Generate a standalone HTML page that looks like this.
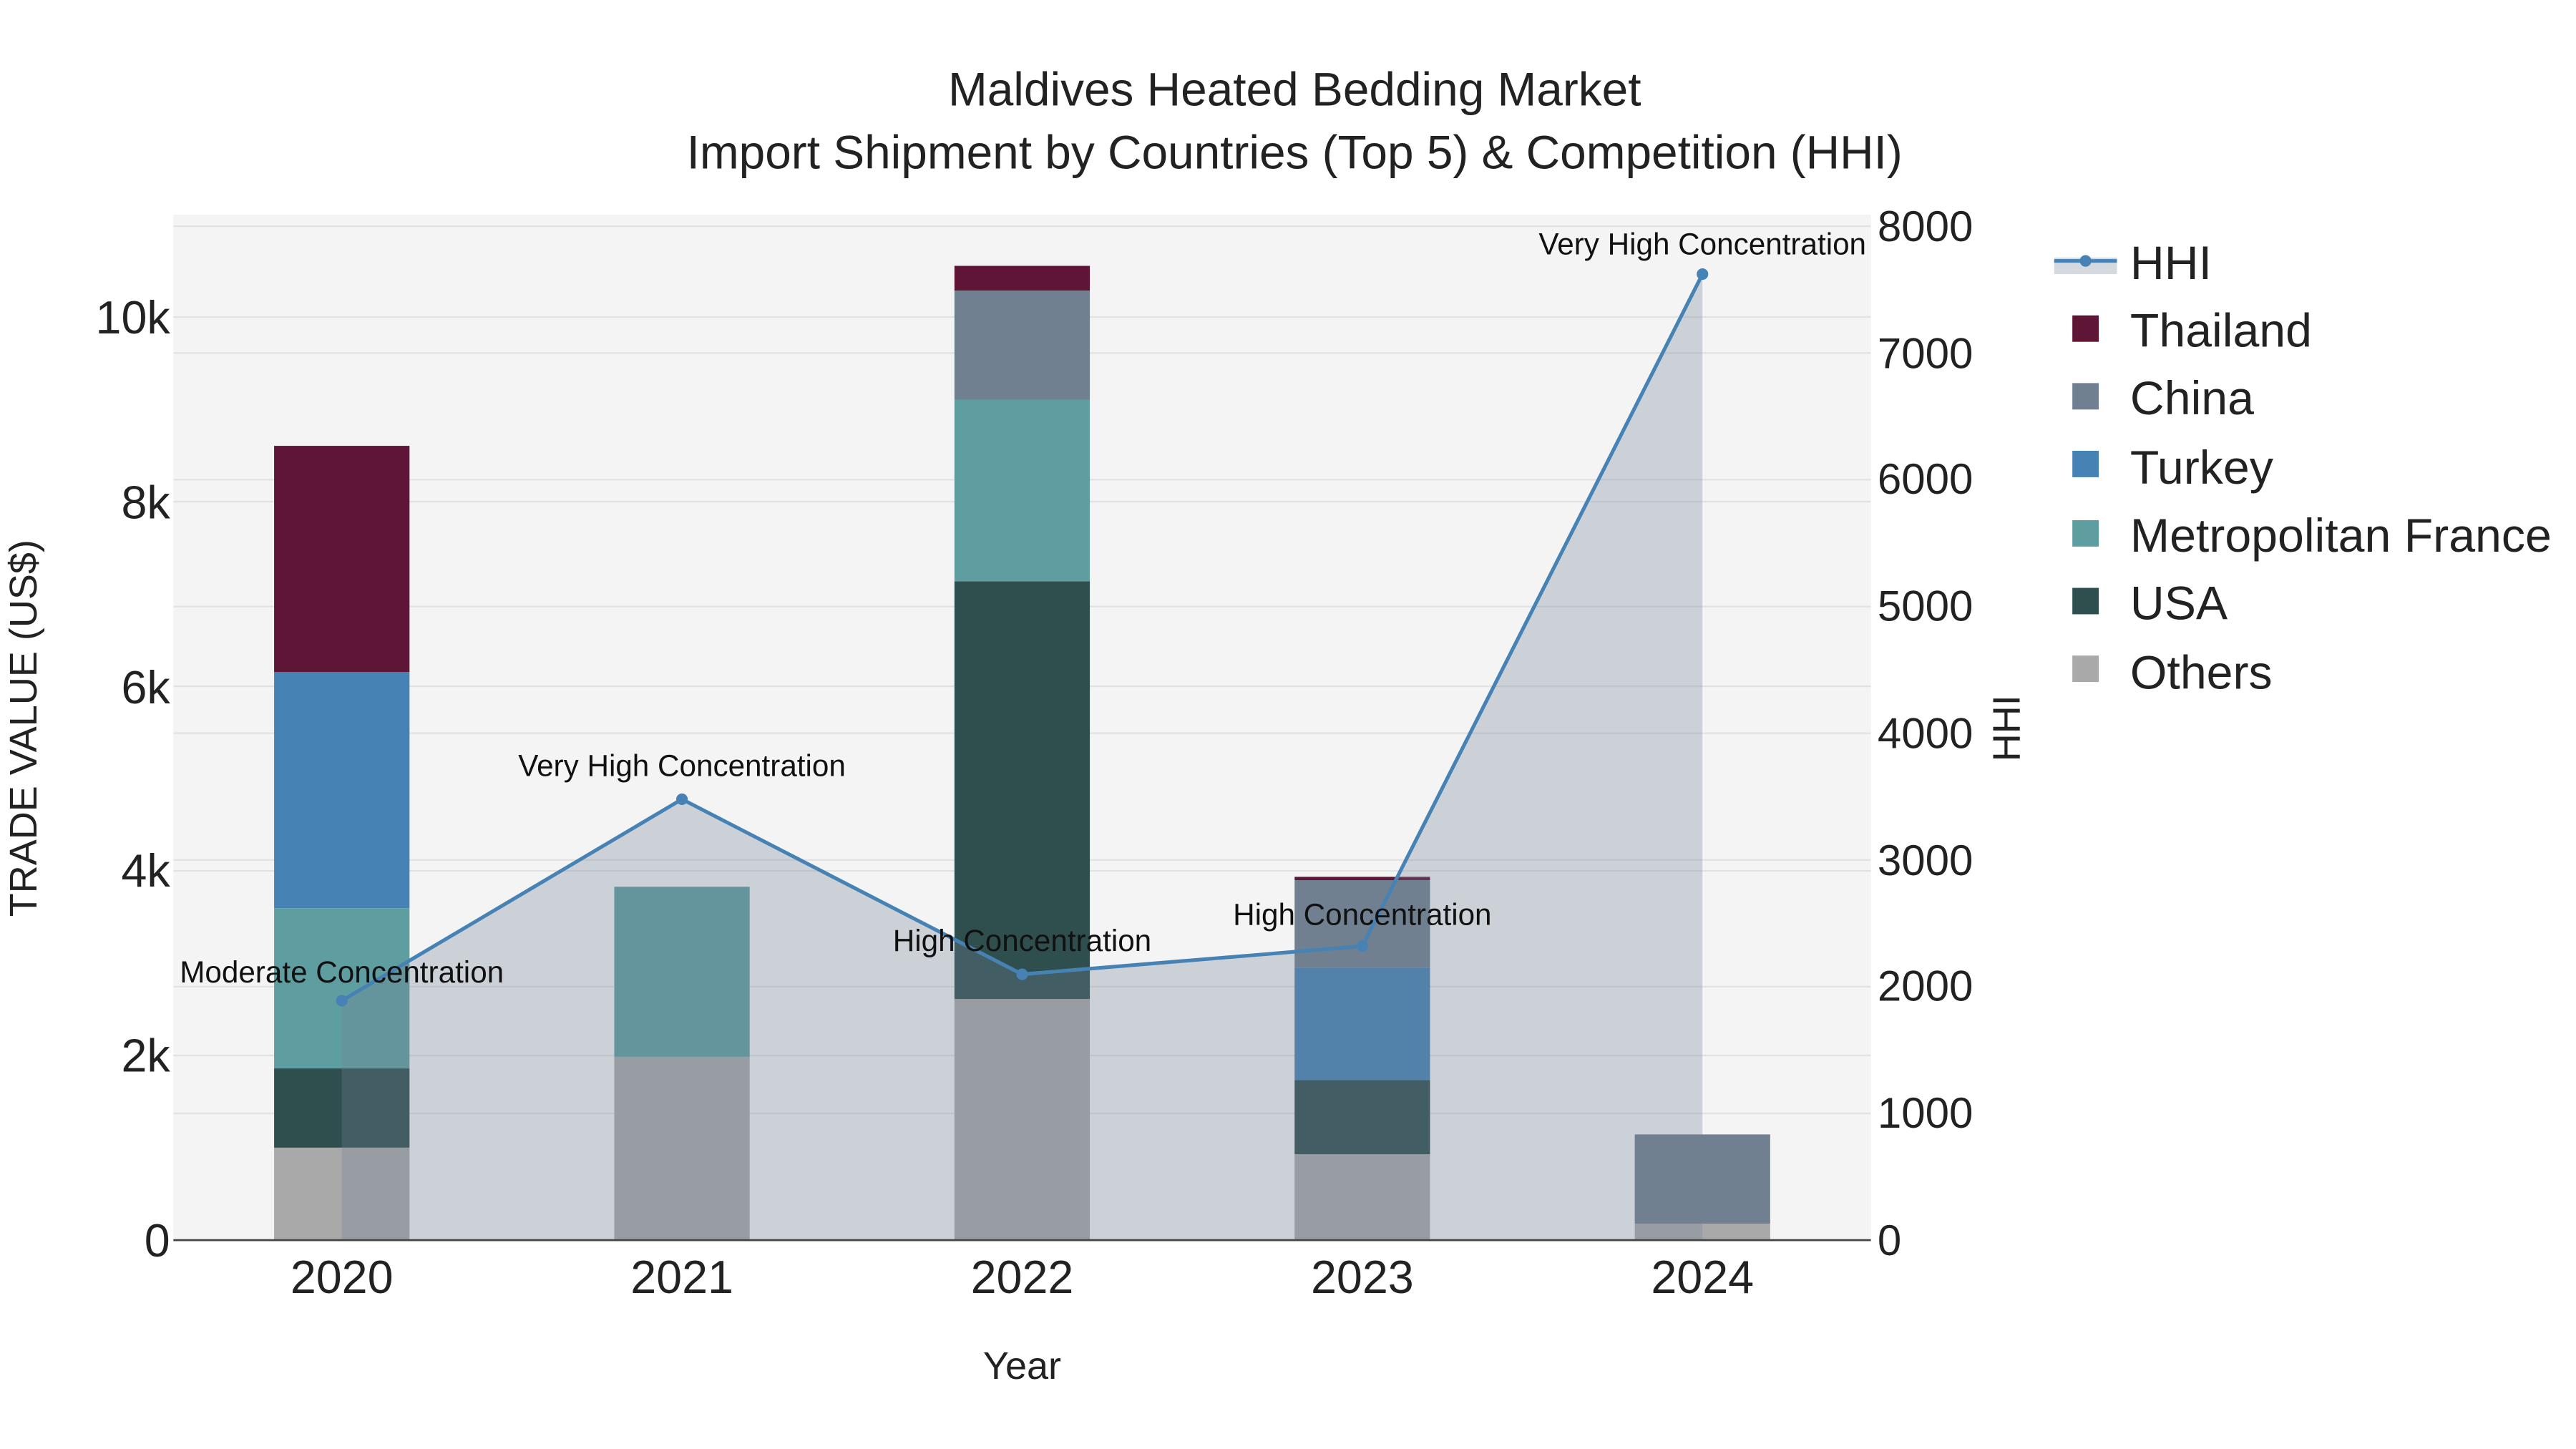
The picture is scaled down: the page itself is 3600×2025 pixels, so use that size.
<!DOCTYPE html>
<html><head><meta charset="utf-8"><style>html,body{margin:0;padding:0;background:#fff}svg{display:block}</style></head><body>
<svg width="3600" height="2025" viewBox="0 0 1560 877.5" xmlns="http://www.w3.org/2000/svg" font-family="Liberation Sans, sans-serif">
<rect x="0" y="0" width="1560" height="877.5" fill="#fff"/>
<rect x="105" y="130" width="1028" height="621" fill="#f4f4f4"/>
<g stroke="#e2e2e2" stroke-width="1">
<line x1="105" x2="1133" y1="639.2" y2="639.2"/><line x1="105" x2="1133" y1="527.4" y2="527.4"/><line x1="105" x2="1133" y1="415.6" y2="415.6"/><line x1="105" x2="1133" y1="303.8" y2="303.8"/><line x1="105" x2="1133" y1="192" y2="192"/>
<line x1="105" x2="1133" y1="674.3" y2="674.3"/><line x1="105" x2="1133" y1="597.5" y2="597.5"/><line x1="105" x2="1133" y1="520.8" y2="520.8"/><line x1="105" x2="1133" y1="444" y2="444"/><line x1="105" x2="1133" y1="367.3" y2="367.3"/><line x1="105" x2="1133" y1="290.5" y2="290.5"/><line x1="105" x2="1133" y1="213.8" y2="213.8"/><line x1="105" x2="1133" y1="137" y2="137"/>
</g>
<g>
<rect x="166" y="695" width="82" height="56" fill="#a9a9a9"/>
<rect x="166" y="647" width="82" height="48" fill="#2f4f4f"/>
<rect x="166" y="550" width="82" height="97" fill="#5f9ea0"/>
<rect x="166" y="407" width="82" height="143" fill="#4682b4"/>
<rect x="166" y="270" width="82" height="137" fill="#5f1535"/>
<rect x="372" y="640" width="82" height="111" fill="#a9a9a9"/>
<rect x="372" y="537" width="82" height="103" fill="#5f9ea0"/>
<rect x="578" y="605" width="82" height="146" fill="#a9a9a9"/>
<rect x="578" y="352" width="82" height="253" fill="#2f4f4f"/>
<rect x="578" y="242" width="82" height="110" fill="#5f9ea0"/>
<rect x="578" y="176" width="82" height="66" fill="#708090"/>
<rect x="578" y="161" width="82" height="15" fill="#5f1535"/>
<rect x="784" y="699" width="82" height="52" fill="#a9a9a9"/>
<rect x="784" y="654" width="82" height="45" fill="#2f4f4f"/>
<rect x="784" y="586" width="82" height="68" fill="#4682b4"/>
<rect x="784" y="533" width="82" height="53" fill="#708090"/>
<rect x="784" y="531" width="82" height="2" fill="#5f1535"/>
<rect x="990" y="741" width="82" height="10" fill="#a9a9a9"/>
<rect x="990" y="687" width="82" height="54" fill="#708090"/>
</g>
<polygon points="207,751 207,606 413,484 619,590 825,573 1031,166 1031,751" fill="rgba(112,128,150,0.3)"/>
<polyline points="207,606 413,484 619,590 825,573 1031,166" fill="none" stroke="#4682b4" stroke-width="2.2"/>
<g fill="#4682b4"><circle cx="207" cy="606" r="3.5"/><circle cx="413" cy="484" r="3.5"/><circle cx="619" cy="590" r="3.5"/><circle cx="825" cy="573" r="3.5"/><circle cx="1031" cy="166" r="3.5"/></g>
<line x1="105" x2="1133" y1="751" y2="751" stroke="#444" stroke-width="1.2"/>
<g font-size="18.3" fill="#111" text-anchor="middle">
<text x="207" y="595">Moderate Concentration</text>
<text x="413" y="470">Very High Concentration</text>
<text x="619" y="576">High Concentration</text>
<text x="825" y="560">High Concentration</text>
<text x="1031" y="154">Very High Concentration</text>
</g>
<g font-size="28" fill="#222" text-anchor="end">
<text x="103" y="761">0</text><text x="103" y="649">2k</text><text x="103" y="537">4k</text><text x="103" y="426">6k</text><text x="103" y="314">8k</text><text x="103" y="202">10k</text>
</g>
<g font-size="26" fill="#222">
<text x="1137" y="760">0</text><text x="1137" y="683">1000</text><text x="1137" y="606">2000</text><text x="1137" y="530">3000</text><text x="1137" y="453">4000</text><text x="1137" y="376">5000</text><text x="1137" y="299">6000</text><text x="1137" y="223">7000</text><text x="1137" y="146">8000</text>
</g>
<g font-size="28" fill="#222" text-anchor="middle">
<text x="207" y="783">2020</text><text x="413" y="783">2021</text><text x="619" y="783">2022</text><text x="825" y="783">2023</text><text x="1031" y="783">2024</text>
</g>
<text x="619" y="835" font-size="23.4" fill="#222" text-anchor="middle">Year</text>
<text transform="translate(22,441) rotate(-90)" font-size="23.4" fill="#222" text-anchor="middle">TRADE VALUE (US$)</text>
<text transform="translate(1223,441) rotate(-90)" font-size="23.4" fill="#222" text-anchor="middle">HHI</text>
<text x="784" y="64" font-size="28.5" fill="#222" text-anchor="middle">Maldives Heated Bedding Market</text>
<text x="784" y="102" font-size="28.5" fill="#222" text-anchor="middle">Import Shipment by Countries (Top 5) &amp; Competition (HHI)</text>
<g font-size="28.7" fill="#222">
<rect x="1244" y="156" width="38" height="10" fill="rgba(112,128,150,0.3)"/>
<line x1="1244" x2="1282" y1="158" y2="158" stroke="#4682b4" stroke-width="2.2"/><circle cx="1263" cy="158" r="3.5" fill="#4682b4"/>
<text x="1290" y="169">HHI</text>
<rect x="1255" y="191" width="16" height="16" fill="#5f1535"/><text x="1290" y="210">Thailand</text>
<rect x="1255" y="232" width="16" height="16" fill="#708090"/><text x="1290" y="251">China</text>
<rect x="1255" y="273" width="16" height="16" fill="#4682b4"/><text x="1290" y="293">Turkey</text>
<rect x="1255" y="315" width="16" height="16" fill="#5f9ea0"/><text x="1290" y="334">Metropolitan France</text>
<rect x="1255" y="356" width="16" height="16" fill="#2f4f4f"/><text x="1290" y="375">USA</text>
<rect x="1255" y="397" width="16" height="16" fill="#a9a9a9"/><text x="1290" y="417">Others</text>
</g>
</svg>
</body></html>
